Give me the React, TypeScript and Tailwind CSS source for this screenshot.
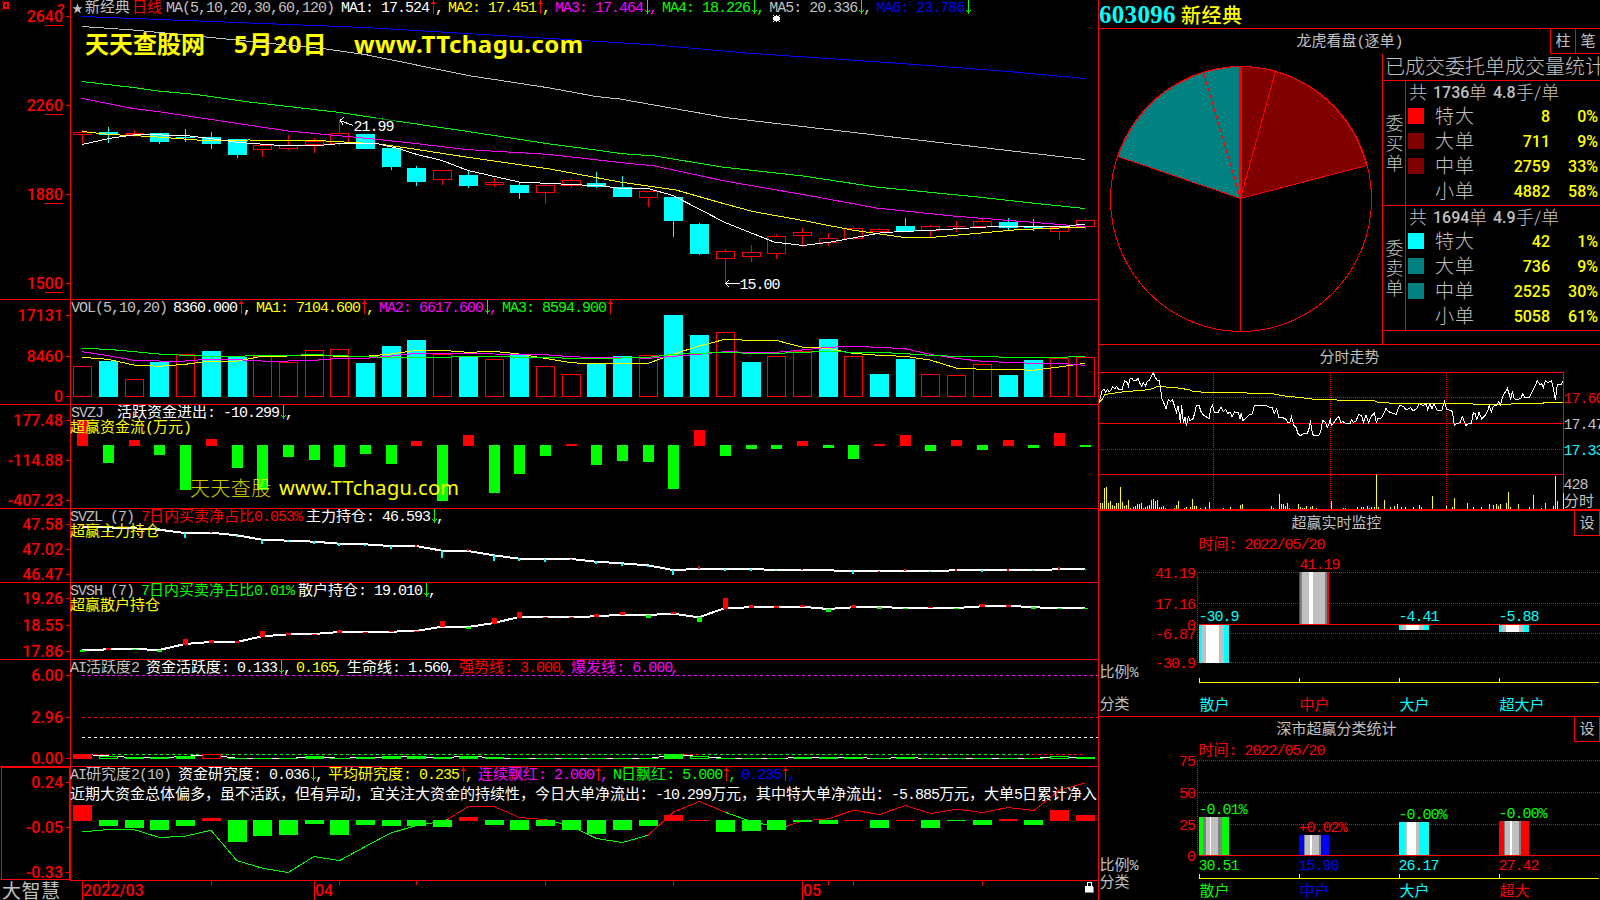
import type { ReactNode } from 'react';

const RED = '#ff0000';
const GREEN = '#00ff00';
const CYAN = '#00ffff';
const YELLOW = '#ffff00';
const MAGENTA = '#ff00ff';
const WHITE = '#ffffff';
const GRAY = '#c0c0c0';
const BLUE = '#0000ff';
const CJK = '"Noto Sans CJK SC", sans-serif';
const MONO = '"Liberation Mono", monospace';

const splitRuns = (s: string) => s.match(/[\u2e80-\uffff]+|[^\u2e80-\uffff]+/g) ?? [];
const isCjk = (s: string) => s.charCodeAt(0) >= 0x2e80;

/** Inline text: 15px Chinese glyphs with 8px wide Latin cells. */
function Mix({ children }: { children: string }) {
  return (
    <>
      {splitRuns(children).map((r, i) =>
        isCjk(r) ? (
          <span key={i} className="font-['Noto_Sans_CJK_SC',sans-serif] text-[15px] leading-[0] font-normal">{r}</span>
        ) : (
          <span key={i} className="font-['Liberation_Mono',monospace] text-[15px] tracking-[-1px]">{r}</span>
        ),
      )}
    </>
  );
}

/** Same type setting for labels inside charts. */
function Label({ x, y, s, fill, end }: { x: number; y: number; s: string; fill: string; end?: boolean }) {
  return (
    <text x={end ? x - 2 : x - 0.5} y={y} fill={fill} fontSize={15} textAnchor={end ? 'end' : 'start'}>
      {splitRuns(s).map((r, i) => (
        <tspan key={i} fontFamily={isCjk(r) ? CJK : MONO} letterSpacing={isCjk(r) ? 0 : -1}>{r}</tspan>
      ))}
    </text>
  );
}

function Canvas({ x, y, w, h, children }: { x: number; y: number; w: number; h: number; children: ReactNode }) {
  return (
    <svg className="absolute top-0 left-0 whitespace-pre" width={w} height={h} viewBox={`${x} ${y} ${w} ${h}`} shapeRendering="crispEdges">
      {children}
    </svg>
  );
}

const cx = (i: number) => Math.floor(82.82 + i * 25.7);

function Box({ x, y, w, h, fill }: { x: number; y: number; w: number; h: number; fill: string }) {
  return <rect x={x} y={y} width={w} height={h} fill={fill} />;
}
function Outline({ x, y, w, h, color, fill = 'none' }: { x: number; y: number; w: number; h: number; color: string; fill?: string }) {
  return <rect x={x + 0.5} y={y + 0.5} width={w - 1} height={Math.max(h - 1, 0.5)} fill={fill} stroke={color} />;
}
function Line({ pts, color, w = 1 }: { pts: number[][]; color: string; w?: number }) {
  return <polyline points={pts.map((p) => p.join(',')).join(' ')} fill="none" stroke={color} strokeWidth={w} />;
}

function Axis({ ticks, top, bottom }: { ticks: [string, number][]; top: number; bottom: number }) {
  return (
    <g>
      <Box x={70} y={top} w={1} h={bottom - top} fill={RED} />
      {ticks.map(([t, y]) => (
        <g key={t}>
          <Box x={66} y={y} w={4} h={1} fill={RED} />
          <text x={63} y={y + 6} fill={RED} textAnchor="end" fontSize={16} fontWeight={500} fontFamily="Roboto, sans-serif">{t}</text>
        </g>
      ))}
    </g>
  );
}

/* ---------- indicator header ---------- */

type Item = { t: string; c: string; a?: 'u' | 'd'; last?: boolean };

function Arrow({ dir }: { dir: 'u' | 'd' }) {
  return (
    <svg width="8" height="14" viewBox="0 0 8 14" shapeRendering="crispEdges" className="-mt-px shrink-0">
      {dir === 'u' ? (
        <path d="M4 0h1v14h-1zM3 2h3v1h-3zM2 3h5v1h-5z" fill={RED} />
      ) : (
        <path d="M4 0h1v14h-1zM3 11h3v1h-3zM2 10h1v1h-1zM6 10h1v1h-1z" fill={GREEN} />
      )}
    </svg>
  );
}

function Head({ title, items, pad }: { title: ReactNode; items: Item[]; pad: string }) {
  return (
    <div className="-ml-px flex h-4 font-['Liberation_Mono',monospace] text-[15px] leading-4">
      <div className={`shrink-0 text-[#c0c0c0] ${pad}`}>{title}</div>
      {items.map((it, i) => (
        <div key={i} className="flex shrink-0" style={{ color: it.c }}>
          <span><Mix>{it.t}</Mix></span>
          {it.a && <Arrow dir={it.a} />}
          <span className="-ml-[2px] w-[13px]">{it.last ? '' : ','}</span>
        </div>
      ))}
    </div>
  );
}

function Panel({ h, children }: { h: string; children: ReactNode }) {
  return <section className={`relative shrink-0 overflow-hidden border-b border-[#ff0000] ${h}`}>{children}</section>;
}

/* ---------- candles ---------- */

// [color, body top, body bottom, wick top, wick bottom]
const candles: [string, number, number, number, number][] = [
  ['r', 132, 135, 130, 143], ['c', 132, 135, 127, 143], ['r', 133, 135, 130, 137], ['c', 133, 142, 133, 144],
  ['c', 137, 138, 129, 142], ['c', 137, 144, 132, 149], ['c', 139, 155, 139, 158], ['r', 145, 150, 145, 157],
  ['r', 145, 149, 135, 150], ['r', 141, 145, 138, 153], ['r', 133, 144, 120, 146], ['c', 134, 149, 134, 149],
  ['c', 148, 167, 148, 170], ['c', 168, 182, 166, 186], ['r', 170, 180, 170, 185], ['c', 175, 186, 171, 188],
  ['r', 182, 185, 178, 187], ['c', 185, 193, 183, 199], ['r', 185, 193, 184, 204], ['r', 180, 186, 178, 188],
  ['c', 183, 187, 172, 188], ['c', 187, 197, 176, 197], ['r', 191, 198, 191, 207], ['c', 197, 221, 197, 237],
  ['c', 224, 254, 223, 255], ['r', 251, 259, 249, 283], ['r', 252, 257, 245, 262], ['r', 236, 254, 234, 259],
  ['r', 232, 236, 228, 247], ['r', 238, 243, 233, 246], ['r', 228, 239, 226, 240], ['r', 229, 232, 228, 235],
  ['c', 226, 231, 218, 231], ['r', 226, 231, 225, 237], ['r', 226, 227, 221, 232], ['r', 221, 227, 219, 227],
  ['c', 222, 228, 218, 231], ['c', 227, 228, 219, 231], ['r', 227, 232, 225, 240], ['r', 220, 227, 218, 229],
];

const maLines: [string, number[][]][] = [
  [BLUE, [[82, 16.5], [147, 19], [276, 24], [365, 27.5], [550, 38.5], [655, 45], [746, 53], [901, 63.5], [1009, 71.5], [1085, 78.5]]],
  [GRAY, [[82, 26.5], [133, 30], [196, 36], [231, 39.5], [326, 49], [365, 54.5], [468, 75.5], [550, 88], [596, 96.5], [620, 99], [725, 117.5], [824, 129], [1085, 159.5]]],
  [GREEN, [[82, 81.5], [133, 87.5], [158, 91], [196, 94.5], [245, 101.5], [340, 112.5], [396, 121], [468, 131.5], [550, 144], [596, 150], [620, 153.5], [655, 156], [722, 167], [803, 176], [876, 187], [978, 197], [1041, 204], [1085, 208.5]]],
  [MAGENTA, [[82, 98.5], [133, 108.5], [161, 112], [288, 131], [358, 137.5], [407, 142.5], [466, 149.5], [550, 154.5], [620, 162.5], [655, 166], [722, 180.5], [817, 197], [876, 208], [953, 216], [1041, 223], [1085, 226.5]]],
  [YELLOW, [[82, 131.5], [109, 134.5], [151, 136.5], [210, 141], [249, 140], [326, 141], [379, 144], [417, 149.5], [466, 157], [550, 169], [620, 182], [676, 190], [725, 204], [753, 211.5], [803, 220.5], [852, 230], [901, 237], [936, 237], [1020, 229.5], [1085, 227]]],
  [WHITE, [[82, 144.5], [109, 138.5], [137, 134.5], [186, 135.5], [214, 139], [239, 142.5], [281, 145.5], [319, 145.5], [340, 143.5], [379, 144], [400, 149], [417, 154.5], [442, 160.5], [468, 170.5], [519, 182], [550, 183.5], [603, 186], [620, 188.5], [648, 188.5], [673, 195.5], [701, 210], [725, 222.5], [774, 242], [803, 245.5], [831, 242], [883, 232.5], [936, 230], [995, 226.5], [1066, 226.5], [1080, 224.5], [1085, 224.5]]],
];

function PricePanel() {
  return (
    <Panel h="h-[300px]">
      <Canvas x={0} y={0} w={1098} h={299}>
        <Axis top={0} bottom={299} ticks={[['2640', 16], ['2260', 105], ['1880', 194], ['1500', 283]]} />
        {[25, 114, 203, 292].map((y) => <Box key={y} x={45} y={y} w={18} h={1} fill={RED} />)}
        <path d="M3 2h6v7h-6zM2 9h1v1h-1zM9 9h1v1h-1zM2 1h1v1h-1z" fill={RED} />
        <Box x={5} y={4} w={2} h={3} fill="#000" />
        <text x={57} y={13} fill={RED} fontSize={13} fontWeight={700} fontFamily='"Liberation Sans", sans-serif'>?</text>
        {candles.map(([k, t, b, wt, wb], i) => {
          const x = cx(i);
          const c = k === 'r' ? RED : CYAN;
          return (
            <g key={i}>
              <Box x={x} y={wt} w={1} h={Math.max(t - wt, 0)} fill={c} />
              <Box x={x} y={b} w={1} h={Math.max(wb - b, 0)} fill={c} />
              {k === 'c' || b - t < 3 ? <Box x={x - 9} y={t} w={19} h={b - t} fill={c} /> : <Outline x={x - 9} y={t} w={19} h={b - t} color={c} />}
            </g>
          );
        })}
        {maLines.map(([c, p], i) => <Line key={i} color={c} pts={p} />)}
        <Line color="#008000" pts={[[375, 118], [396, 121]]} />
        <path d="M340 120.5L353 125.5M340 120.5L344 117.5M340 120.5L343 124.5" stroke={WHITE} fill="none" />
        <Label x={354} y={131} s="21.99" fill={WHITE} />
        <path d="M725 283.5H740M725.5 283.5L729 280M725.5 283.5L729 287" stroke={WHITE} fill="none" />
        <Label x={740} y={289} s="15.00" fill={WHITE} />
        <path d="M774 16h5v5h-5zM773 17h7v3h-7zM773 15h1v1h-1zM779 15h1v1h-1zM773 21h1v1h-1zM779 21h1v1h-1zM776 15h1v7h-1z" fill={WHITE} />
      </Canvas>
      <div className="relative pt-px">
        <Head
          pad="ml-[73px] w-[269px]"
          title={
            <div className="flex">
              <svg width="11" height="11" viewBox="0 0 24 24" className="mt-[2px] mr-[2px] shrink-0"><path d="M12 1l3 8h8.500l-7 5.200 2.700 8.500L12 17.500l-7.200 5.200 2.700-8.500-7-5.200H9z" fill={GRAY} /></svg>
              <span className="w-[47px] shrink-0"><Mix>新经典</Mix></span>
              <span className="w-[34px] shrink-0 text-[#ff0000]"><Mix>日线</Mix></span>
              <Mix>MA(5,10,20,30,60,120)</Mix>
            </div>
          }
          items={[
            { t: 'MA1: 17.524', c: WHITE, a: 'u' },
            { t: 'MA2: 17.451', c: YELLOW, a: 'u' },
            { t: 'MA3: 17.464', c: MAGENTA, a: 'd' },
            { t: 'MA4: 18.226', c: GREEN, a: 'd' },
            { t: 'MA5: 20.336', c: GRAY, a: 'd' },
            { t: 'MA6: 23.786', c: BLUE, a: 'd', last: true },
          ]}
        />
        <div className="mt-[11px] ml-[85px] flex font-['Noto_Sans','Noto_Sans_CJK_SC',sans-serif] text-2xl leading-8 font-bold text-[#ffff00]">
          <span className="w-[149px]">天天查股网</span>
          <span className="w-[120px] tracking-[0.8px]">5月20日</span>
          <span className="tracking-[0.45px]">www.TTchagu.com</span>
        </div>
      </div>
    </Panel>
  );
}

/* ---------- volume ---------- */

const volumes: [string, number][] = [
  ['r', 366], ['c', 361], ['r', 379], ['c', 362], ['r', 354], ['c', 351], ['c', 357], ['r', 356], ['r', 362], ['r', 350],
  ['r', 349], ['c', 363], ['c', 346], ['c', 340], ['r', 354], ['c', 357], ['r', 359], ['c', 355], ['r', 366], ['r', 374],
  ['c', 364], ['c', 356], ['r', 355], ['c', 315], ['c', 335], ['r', 332], ['c', 362], ['r', 356], ['r', 351], ['c', 339],
  ['r', 356], ['c', 374], ['c', 359], ['r', 374], ['r', 375], ['r', 364], ['c', 375], ['c', 360], ['r', 358], ['r', 357],
];
const volLines: [string, number[]][] = [
  [YELLOW, [187, 193, 210, 214, 208, 198, 198, 184, 183, 180, 184, 184, 177, 166, 166, 172, 169, 177, 190, 203, 207, 205, 205, 178, 153, 133, 136, 136, 156, 160, 175, 181, 184, 195, 219, 223, 223, 226, 216, 205]],
  [MAGENTA, [170, 182, 196, 198, 198, 192, 194, 198, 198, 196, 190, 190, 183, 175, 176, 176, 177, 178, 179, 185, 188, 187, 190, 184, 178, 170, 172, 172, 165, 157, 154, 157, 161, 178, 190, 199, 202, 205, 205, 211]],
  [GREEN, [160, 163, 170, 177, 181, 184, 184, 181, 181, 179, 182, 185, 187, 187, 187, 184, 184, 187, 187, 190, 190, 189, 187, 178, 175, 172, 175, 175, 172, 169, 172, 172, 176, 181, 184, 184, 187, 187, 187, 184]],
];

function VolumePanel() {
  return (
    <Panel h="h-[105px]">
      <Canvas x={0} y={300} w={1098} h={104}>
        <Axis top={300} bottom={404} ticks={[['17131', 315], ['8460', 356], ['0', 396]]} />
        {volumes.map(([k, t], i) =>
          k === 'c' ? <Box key={i} x={cx(i) - 9} y={t} w={19} h={397 - t} fill={CYAN} /> : <Outline key={i} x={cx(i) - 9} y={t} w={19} h={397 - t} color={RED} />,
        )}
        {volLines.map(([c, ys]) => <Line key={c} color={c} pts={ys.map((y, i) => [cx(i), 295 + y / 3])} />)}
      </Canvas>
      <div className="relative pt-px">
        <Head
          pad="ml-[72px] w-[102px]"
          title={<Mix>VOL(5,10,20)</Mix>}
          items={[
            { t: '8360.000', c: WHITE, a: 'u' },
            { t: 'MA1: 7104.600', c: YELLOW, a: 'u' },
            { t: 'MA2: 6617.600', c: MAGENTA, a: 'd' },
            { t: 'MA3: 8594.900', c: GREEN, a: 'u', last: true },
          ]}
        />
      </div>
    </Panel>
  );
}

/* ---------- capital flow ---------- */

// bar ends, in thirds of a pixel below y=295; the base line is 450
const flow = [375, 504, 435, 480, 585, 432, 519, 585, 486, 495, 516, 477, 507, 438, 618, 420, 594, 537, 483, 447, 510, 498, 501, 582, 405, 483, 462, 462, 438, 459, 492, 447, 420, 468, 435, 465, 435, 459, 414, 456];

function FlowPanel() {
  return (
    <Panel h="h-[104px]">
      <Canvas x={0} y={405} w={1098} h={103}>
        <Axis top={405} bottom={508} ticks={[['177.48', 420], ['-114.88', 460], ['-407.23', 500]]} />
        {flow.map((v, i) => {
          const y = Math.round(295 + v / 3);
          return v < 450 ? <Box key={i} x={cx(i) - 5} y={y} w={11} h={446 - y} fill={RED} /> : <Box key={i} x={cx(i) - 5} y={445} w={11} h={y - 445} fill={GREEN} />;
        })}
      </Canvas>
      <div className="relative pt-px">
        <Head pad="ml-[72px] w-[46px]" title={<Mix>SVZJ</Mix>} items={[{ t: '活跃资金进出: -10.299', c: WHITE, a: 'd' }]} />
        <div className="-mt-px ml-[70px] text-[15px] leading-4 font-['Liberation_Mono',monospace] text-[#ffff00]"><Mix>超赢资金流(万元)</Mix></div>
        <div className="mt-[37px] ml-[190px] flex text-xl leading-7 text-[#ffff00]">
          <span className="w-[89px] font-['Noto_Sans_CJK_SC',sans-serif] font-light tracking-[0.4px] opacity-80">天天查股</span>
          <span className="font-['Noto_Sans',sans-serif] tracking-[0.35px]">www.TTchagu.com</span>
        </div>
      </div>
    </Panel>
  );
}

/* ---------- holdings ---------- */

const mainHold = [697, 697, 700, 704, 714, 713, 721, 734, 737, 740, 746, 748, 753, 753, 767, 768, 781, 791, 791, 792, 800, 805, 811, 825, 822, 822, 822, 825, 825, 826, 828, 828, 828, 828, 826, 825, 825, 825, 823, 822];
const mainMarks: [number, string, number, number][] = [
  [0, RED, 688, 697], [1, CYAN, 699, 708], [3, CYAN, 700, 706], [4, CYAN, 714, 729], [5, RED, 710, 713], [6, CYAN, 721, 728], [7, CYAN, 734, 746], [8, CYAN, 735, 741],
  [9, CYAN, 738, 746], [10, CYAN, 744, 752], [11, CYAN, 746, 752], [12, CYAN, 753, 762], [13, RED, 750, 756], [14, CYAN, 768, 789], [15, RED, 762, 768], [16, CYAN, 780, 798],
  [17, CYAN, 790, 800], [18, CYAN, 792, 801], [19, RED, 792, 795], [20, CYAN, 798, 807], [21, CYAN, 804, 813], [22, CYAN, 810, 816], [23, CYAN, 825, 840], [24, RED, 813, 822],
  [25, CYAN, 822, 828], [26, CYAN, 822, 828], [27, CYAN, 825, 828], [28, RED, 822, 825], [30, CYAN, 828, 837], [31, RED, 828, 831], [32, RED, 822, 828], [33, CYAN, 828, 831],
  [34, RED, 822, 828], [35, CYAN, 825, 831], [36, RED, 822, 828], [37, CYAN, 825, 828], [38, RED, 816, 825], [39, CYAN, 822, 825],
];
const retailHold = [211, 208, 207, 210, 192, 186, 186, 169, 163, 162, 156, 156, 155, 153, 140, 141, 129, 111, 111, 111, 109, 104, 105, 101, 112, 84, 82, 80, 80, 87, 82, 81, 84, 84, 84, 79, 77, 82, 84, 84];
const retailMarks: [number, string, number, number][] = [
  [0, GREEN, 210, 215], [1, RED, 204, 209], [2, GREEN, 207, 210], [3, GREEN, 209, 215], [4, RED, 177, 195], [5, RED, 180, 189], [6, RED, 183, 189], [7, RED, 153, 171], [8, RED, 159, 165],
  [9, RED, 161, 164], [10, RED, 150, 159], [11, RED, 156, 159], [12, RED, 153, 156], [13, RED, 153, 156], [14, RED, 123, 141], [15, GREEN, 141, 147], [16, RED, 114, 132],
  [17, RED, 96, 114], [18, RED, 111, 114], [19, RED, 111, 114], [20, RED, 102, 111], [21, RED, 96, 105], [22, GREEN, 105, 114], [23, RED, 96, 102], [24, GREEN, 111, 126],
  [25, RED, 54, 87], [26, RED, 75, 84], [27, RED, 78, 84], [28, RED, 75, 81], [29, GREEN, 87, 96], [30, RED, 75, 84], [31, GREEN, 81, 87], [32, GREEN, 84, 87],
  [33, RED, 81, 84], [34, GREEN, 84, 87], [35, RED, 72, 81], [36, RED, 75, 81], [37, GREEN, 81, 87], [38, GREEN, 84, 87], [39, GREEN, 84, 87],
];

function Marks({ data, base, w }: { data: [number, string, number, number][]; base: number; w: number }) {
  return (
    <g>
      {data.map(([i, c, a, b]) => (
        <Box key={i} x={cx(i) - Math.floor(w / 2)} y={Math.round(base + a / 3)} w={w} h={Math.max(1, Math.round((b - a) / 3))} fill={c} />
      ))}
    </g>
  );
}

function HoldTitle({ code, ratio, color }: { code: string; ratio: string; color: string }) {
  return (
    <div className="flex">
      <span className="w-[71px]"><Mix>{code}</Mix></span>
      <span className="mr-1" style={{ color }}><Mix>{ratio}</Mix></span>
    </div>
  );
}

function MainHoldPanel() {
  return (
    <Panel h="h-[74px]">
      <Canvas x={0} y={509} w={1098} h={73}>
        <Axis top={509} bottom={582} ticks={[['47.58', 524], ['47.02', 549], ['46.47', 574]]} />
        <Line color={WHITE} w={2} pts={mainHold.map((y, i) => [cx(i), 295 + y / 3])} />
        <Marks data={mainMarks} base={295} w={2} />
      </Canvas>
      <div className="relative pt-px">
        <Head pad="ml-[71px]" title={<HoldTitle code="SVZL (7)" ratio="7日内买卖净占比0.053%" color={RED} />} items={[{ t: '主力持仓: 46.593', c: WHITE, a: 'd' }]} />
        <div className="-mt-px ml-[70px] font-['Liberation_Mono',monospace] text-[15px] leading-4 text-[#ffff00]"><Mix>超赢主力持仓</Mix></div>
      </div>
    </Panel>
  );
}

function RetailHoldPanel() {
  return (
    <Panel h="h-[77px]">
      <Canvas x={0} y={583} w={1098} h={76}>
        <Axis top={583} bottom={659} ticks={[['19.26', 598], ['18.55', 625], ['17.86', 651]]} />
        <Line color={WHITE} w={2} pts={retailHold.map((y, i) => [cx(i), 580 + y / 3])} />
        <Marks data={retailMarks} base={580} w={5} />
      </Canvas>
      <div className="relative pt-px">
        <Head pad="ml-[71px]" title={<HoldTitle code="SVSH (7)" ratio="7日内买卖净占比0.01%" color={GREEN} />} items={[{ t: '散户持仓: 19.010', c: WHITE, a: 'd' }]} />
        <div className="-mt-px ml-[70px] font-['Liberation_Mono',monospace] text-[15px] leading-4 text-[#ffff00]"><Mix>超赢散户持仓</Mix></div>
      </div>
    </Panel>
  );
}

/* ---------- activity ---------- */

const activity = [522, 528, 531, 531, 528, 522, 534, 534, 534, 528, 534, 531, 528, 528, 531, 528, 531, 534, 534, 534, 534, 534, 534, 522, 528, 534, 534, 534, 531, 531, 531, 534, 531, 534, 534, 534, 534, 534, 528, 531];
const hollow = [1, 5, 24, 38];
const activityLine = [522, 527, 532, 533, 528, 524, 534, 535, 535, 529, 534, 532, 530, 529, 532, 528, 532, 535, 535, 535, 535, 535, 535, 524, 528, 534, 535, 535, 531, 532, 531, 535, 531, 535, 535, 535, 535, 535, 528, 534];

function Dash({ x1, x2, y, c }: { x1: number; x2: number; y: number; c: string }) {
  return <line x1={x1} x2={x2} y1={y + 0.5} y2={y + 0.5} stroke={c} strokeDasharray="3 3" />;
}

function ActivityPanel() {
  return (
    <Panel h="h-[107px]">
      <Canvas x={0} y={660} w={1098} h={106}>
        <Axis top={660} bottom={766} ticks={[['6.00', 675], ['2.96', 717], ['0.00', 758]]} />
        <Dash x1={82} x2={1098} y={675} c={MAGENTA} />
        <Dash x1={82} x2={1098} y={717} c={RED} />
        <Dash x1={82} x2={1098} y={737} c={WHITE} />
        <Dash x1={82} x2={112} y={754} c={RED} />
        <Dash x1={112} x2={684} y={754} c={GREEN} />
        <Dash x1={684} x2={702} y={754} c={RED} />
        <Dash x1={702} x2={1032} y={754} c={GREEN} />
        <Dash x1={1032} x2={1085} y={754} c={RED} />
        <Line color={WHITE} pts={activityLine.map((y, i) => [cx(i), 580.3 + y / 3])} />
        {activity.map((v, i) => {
          const y = 580 + v / 3;
          const c = i === 0 || i === 5 ? RED : GREEN;
          return hollow.includes(i) ? <Outline key={i} x={cx(i) - 9} y={y} w={19} h={759 - y} color={c} fill="#000" /> : <Box key={i} x={cx(i) - 9} y={y} w={19} h={759 - y} fill={c} />;
        })}
      </Canvas>
      <div className="relative pt-px">
        <Head
          pad="ml-[71px] w-[76px]"
          title={<Mix>AI活跃度2</Mix>}
          items={[
            { t: '资金活跃度: 0.133', c: WHITE, a: 'd' },
            { t: '0.165', c: YELLOW },
            { t: '生命线: 1.560', c: WHITE },
            { t: '强势线: 3.000', c: RED },
            { t: '爆发线: 6.000', c: MAGENTA },
          ]}
        />
      </div>
    </Panel>
  );
}

/* ---------- research ---------- */

const research = [675, 738, 744, 750, 738, 714, 786, 768, 765, 732, 765, 735, 738, 738, 741, 711, 735, 750, 738, 750, 762, 750, 738, 705, 719, 756, 753, 750, 726, 732, 719, 744, 719, 744, 723, 735, 717, 735, 690, 705];
const researchLine: [string, number[][]][] = [
  [GREEN, [[0, 755], [1, 748], [2, 748], [3, 772], [4, 768], [5, 750], [6, 841], [7, 864], [8, 877], [9, 829], [10, 841], [11, 799], [12, 758], [13, 736], [14, 723], [14.2, 718]]],
  [RED, [[14.2, 718], [15, 679], [16, 679], [17, 712], [18, 718]]],
  [GREEN, [[18, 718], [19, 738], [20, 775], [21, 787], [22, 765]]],
  [RED, [[22, 765], [23, 695], [24, 664], [25, 696]]],
  [GREEN, [[25, 696], [26, 724], [27, 740], [27.4, 738]]],
  [RED, [[27.4, 738], [28, 722], [29, 716], [30, 690], [31, 703], [32, 676], [33, 700], [34, 687], [35, 697], [36, 682], [37, 691], [38, 630], [39, 608]]],
];

function ResearchPanel() {
  return (
    <section className="relative h-[114px] shrink-0 overflow-hidden">
      <Canvas x={0} y={767} w={1098} h={114}>
        <Axis top={767} bottom={880} ticks={[['0.24', 782], ['-0.05', 827], ['-0.33', 872]]} />
        <Outline x={1} y={767} w={69} h={113} color={RED} />
        <Box x={70} y={880} w={1028} h={1} fill={RED} />
        {researchLine.map(([c, p], k) => <Line key={k} color={c} pts={p.map(([i, y]) => [82.5 + i * 25.71, 580.2 + y / 3])} />)}
        {research.map((v, i) => {
          const y = Math.round(580 + v / 3);
          return v < 720 ? <Box key={i} x={cx(i) - 9} y={y} w={19} h={821 - y} fill={RED} /> : <Box key={i} x={cx(i) - 9} y={820} w={19} h={y - 820} fill={GREEN} />;
        })}
      </Canvas>
      <div className="relative pt-px">
        <Head
          pad="ml-[71px] w-[108px]"
          title={<Mix>AI研究度2(10)</Mix>}
          items={[
            { t: '资金研究度: 0.036', c: WHITE, a: 'd' },
            { t: '平均研究度: 0.235', c: YELLOW, a: 'u' },
            { t: '连续飘红: 2.000', c: MAGENTA, a: 'u' },
            { t: 'N日飘红: 5.000', c: GREEN, a: 'u' },
            { t: '0.235', c: BLUE, a: 'u' },
          ]}
        />
        <div className="mt-[4px] ml-[70px] font-['Liberation_Mono',monospace] text-[15px] leading-4 whitespace-nowrap text-white">
          <Mix>近期大资金总体偏多，虽不活跃，但有异动，宜关注大资金的持续性，今日大单净流出：-10.299万元，其中特大单净流出：-5.885万元，大单5日累计净入</Mix>
        </div>
      </div>
    </section>
  );
}

function TimeAxis() {
  const months: [number, string][] = [[82, '2022/03'], [314, '04'], [802, '05']];
  return (
    <footer className="relative h-[19px] shrink-0 overflow-hidden">
      <Canvas x={0} y={881} w={1098} h={19}>
        {months.map(([x, t]) => (
          <g key={t}>
            <Box x={x} y={881} w={1} h={19} fill={RED} />
            <text x={x + 1} y={896} fill={RED} fontSize={16} fontWeight={500} fontFamily="Roboto, sans-serif">{t}</text>
          </g>
        ))}
        {[108, 211, 339, 416, 545, 673, 828, 853, 982].map((x) => <Box key={x} x={x} y={881} w={1} h={4} fill={RED} />)}
        <path d="M1085 886h8v6h-8zM1087 883h1v3h-1zM1091 883h1v3h-1zM1087 882h5v1h-5z" fill={WHITE} />
        <path d="M1093 887h1v6h-9v-1h8z" fill="#808080" />
      </Canvas>
      <div className="relative ml-[2px] font-['Noto_Sans_CJK_SC',sans-serif] text-[19px] leading-[17px] tracking-[0.5px] text-[#c0c0c0]">大智慧</div>
    </footer>
  );
}

/* ---------- order book pie ---------- */

const P: [number, number] = [1240.5, 198.5];
const arc = (a: number[], b: number[]) => `M${P[0]} ${P[1]}L${a[0]} ${a[1]}A130.500 132.500 0 0 1 ${b[0]} ${b[1]}Z`;

function Pie() {
  return (
    <Canvas x={1099} y={54} w={283} h={290}>
      <ellipse cx={1241} cy={199} rx={130.5} ry={132.5} fill="none" stroke={RED} />
      <path d={arc([1118, 156.5], [1203.5, 72.5])} fill="#008080" stroke={RED} />
      <path d={arc([1203.5, 72.5], [1240.5, 66.5])} fill="#008080" stroke={RED} />
      <path d={arc([1241.5, 66.5], [1275.5, 71.5])} fill="#800000" stroke={RED} />
      <path d={arc([1275.5, 71.5], [1366.5, 165.5])} fill="#800000" stroke={RED} />
      <Box x={1240} y={67} w={2} h={131} fill={RED} />
      <Box x={1239} y={67} w={3} h={118} fill={RED} />
      <Box x={1240} y={198} w={1} h={134} fill={RED} />
    </Canvas>
  );
}

type Row = [string, string, string, string];
function OrderGroup({ side, total, avg, rows }: { side: string[]; total: string; avg: string; rows: Row[] }) {
  return (
    <div className="flex h-[125px] border-b border-[#ff0000]">
      <div className="flex w-[21px] shrink-0 flex-col items-center pt-[31px] font-['Noto_Sans_CJK_SC',sans-serif] text-[18px] leading-5 font-light">
        {side.map((c) => <span key={c}>{c}</span>)}
      </div>
      <div className="min-w-0 flex-1 border-l border-[#ff0000] font-['Roboto','Noto_Sans_CJK_SC',sans-serif] text-base">
        <div className="flex h-[23px] items-center pt-px pl-[3px] leading-5 whitespace-nowrap">
          <span className="w-6 text-[18px] font-light">共</span>
          <span className="w-[36px] font-medium">{total}</span>
          <span className="w-[24px] text-[18px] font-light">单</span>
          <span className="w-[23px] font-medium">{avg}</span>
          <span className="text-[18px] font-light">手/单</span>
        </div>
        {rows.map(([label, count, pct, swatch]) => (
          <div key={label} className="flex h-[25px] items-center pl-[2px]">
            <span className="size-4 shrink-0 -translate-y-px" style={{ background: swatch }} />
            <span className="ml-[11px] w-[46px] shrink-0 text-[19px] leading-5 font-light tracking-[1px]">{label}</span>
            <span className="w-[69px] shrink-0 text-right font-medium text-[#ffff00]">{count}</span>
            <span className="w-[48px] shrink-0 text-right font-medium text-[#ffff00]">{pct}</span>
          </div>
        ))}
      </div>
    </div>
  );
}

function OrderPanel() {
  return (
    <section className="flex h-[345px] shrink-0 flex-col border-b border-[#ff0000] text-[#c0c0c0]">
      <header className="flex h-[29px] items-center border-b border-[#ff0000] pt-[2px]">
        <span className="w-[82px] font-['Liberation_Serif',serif] text-[25px] leading-7 font-bold tracking-[0.3px] text-[#00ffff]">603096</span>
        <span className="font-['Noto_Sans_CJK_SC',sans-serif] text-[20px] leading-7 font-medium tracking-[0.5px] text-[#ffff00]">新经典</span>
      </header>
      <div className="relative flex h-[25px] justify-end">
        <div className="absolute inset-x-0 top-[6px] text-center font-['Liberation_Mono',monospace] text-[15px] leading-4"><Mix>龙虎看盘(逐单)</Mix></div>
        {['柱', '笔'].map((t) => (
          <button key={t} className="relative flex h-[25px] w-[25px] justify-center border-b border-l border-[#ff0000] font-['Noto_Sans_CJK_SC',sans-serif] text-[15px] leading-[22px]">{t}</button>
        ))}
      </div>
      <div className="flex min-h-0 flex-1">
        <div className="relative w-[283px] shrink-0"><Pie /></div>
        <div className="w-[218px] shrink-0 overflow-hidden border-l border-[#ff0000] pl-px">
          <div className="h-[27px] border-b border-[#ff0000] pl-px font-['Noto_Sans_CJK_SC',sans-serif] text-[20px] leading-[24px] font-light whitespace-nowrap">已成交委托单成交量统计</div>
          <OrderGroup side={['委', '买', '单']} total="1736" avg="4.8" rows={[['特大', '8', '0%', '#ff0000'], ['大单', '711', '9%', '#800000'], ['中单', '2759', '33%', '#800000'], ['小单', '4882', '58%', '#000000']]} />
          <OrderGroup side={['委', '卖', '单']} total="1694" avg="4.9" rows={[['特大', '42', '1%', '#00ffff'], ['大单', '736', '9%', '#008080'], ['中单', '2525', '30%', '#008080'], ['小单', '5058', '61%', '#000000']]} />
        </div>
      </div>
    </section>
  );
}

/* ---------- intraday ---------- */

const intraday = '27,187 33,166 37,150 43,148 47,155 52,148 58,155 64,148 68,140 74,146 80,139 86,148 96,148 100,134 104,122 110,124 115,138 120,116 126,114 130,121 138,121 144,114 150,130 155,139 160,127 166,137 172,124 178,121 184,108 190,98 196,112 202,121 208,122 212,148 216,176 222,190 228,205 235,178 241,184 247,178 253,196 259,217 264,198 268,220 271,247 275,196 278,230 281,247 285,230 289,257 295,229 300,241 308,238 314,220 319,196 328,197 332,212 338,223 348,229 357,236 362,206 368,195 373,217 384,217 393,200 400,215 407,208 413,220 420,215 426,230 434,215 445,217 450,236 454,218 458,241 466,235 472,229 478,223 487,221 493,196 530,197 541,202 546,200 553,220 560,205 567,232 586,234 593,247 600,247 604,229 612,256 618,262 624,280 631,287 640,280 652,280 658,262 661,241 665,270 670,286 686,286 692,274 698,241 705,245 712,262 718,250 721,235 724,257 732,247 740,235 746,229 752,246 760,245 768,250 780,250 785,238 790,246 797,244 806,224 815,225 820,247 828,224 836,248 843,230 853,218 859,247 864,234 872,236 880,224 888,205 895,214 905,218 919,223 924,206 930,196 940,198 947,208 955,206 962,203 970,212 980,205 988,190 1000,196 1008,190 1013,208 1019,191 1026,205 1032,190 1042,211 1055,212 1063,184 1070,207 1080,210 1087,214 1093,256 1100,250 1110,248 1117,229 1128,256 1135,250 1144,250 1150,218 1156,220 1160,240 1167,217 1175,236 1187,224 1193,212 1198,196 1204,215 1210,198 1220,195 1226,184 1231,194 1240,165 1252,145 1257,160 1262,178 1267,154 1273,176 1283,178 1293,173 1298,161 1305,173 1318,172 1325,157 1333,142 1342,122 1350,133 1355,130 1360,143 1366,121 1373,128 1384,122 1391,148 1396,178 1402,134 1413,133 1419,124';
const average = '27,187 36,178 45,163 90,156 180,148 202,139 255,142 300,149 308,154 360,157 450,158 545,160 580,167 620,171 680,178 855,182 865,187 930,190 1120,190 1180,193 1250,193 1275,190 1350,190 1370,187 1418,186';
const ticksVol = [32, 489, 37, 489, 43, 444, 49, 441, 55, 489, 61, 483, 67, 495, 73, 498, 79, 489, 85, 489, 91, 441, 97, 486, 103, 498, 109, 495, 115, 480, 121, 504, 130, 501, 136, 498, 142, 492, 148, 492, 154, 489, 160, 504, 166, 501, 172, 498, 178, 495, 184, 480, 190, 477, 196, 483, 202, 480, 208, 501, 214, 502, 220, 498, 226, 503, 253, 504, 259, 495, 265, 483, 283, 504, 289, 501, 301, 501, 307, 477, 313, 498, 319, 498, 331, 504, 346, 501, 358, 486, 400, 504, 421, 501, 451, 495, 457, 492, 544, 498, 550, 504, 568, 462, 574, 492, 580, 492, 586, 498, 592, 489, 598, 503, 625, 492, 631, 500, 637, 504, 643, 504, 649, 498, 661, 501, 667, 498, 679, 503, 724, 483, 760, 504, 766, 504, 802, 501, 814, 502, 820, 502, 832, 498, 838, 504, 844, 501, 853, 500, 859, 403, 865, 501, 883, 480, 901, 501, 913, 498, 922, 492, 934, 500, 946, 501, 970, 501, 988, 495, 994, 500, 1027, 468, 1069, 498, 1087, 501, 1093, 474, 1132, 489, 1150, 500, 1174, 501, 1198, 492, 1210, 495, 1219, 492, 1225, 498, 1231, 492, 1249, 489, 1255, 456, 1261, 500, 1285, 492, 1318, 501, 1330, 465, 1354, 503, 1366, 489, 1390, 498, 1396, 408, 1402, 483, 1420, 459];

const scaled = (s: string) => s.split(' ').map((p) => { const [x, y] = p.split(',').map(Number); return [1090 + x / 3, 340.2 + y / 3]; });

function Dots({ x1, y1, x2, y2 }: { x1: number; y1: number; x2: number; y2: number }) {
  const v = x1 === x2;
  return <line x1={v ? x1 + 0.5 : x1} x2={v ? x2 + 0.5 : x2} y1={v ? y1 : y1 + 0.5} y2={v ? y2 : y2 + 0.5} stroke={RED} strokeDasharray="1 1" />;
}

function IntradayPanel() {
  return (
    <section className="relative h-[166px] shrink-0 overflow-hidden border-b-2 border-[#ff0000]">
      <Canvas x={1099} y={345} w={501} h={164}>
        {[372, 423, 474].map((y) => <Box key={y} x={1099} y={y} w={465} h={1} fill={RED} />)}
        <Box x={1563} y={372} w={1} h={137} fill={RED} />
        <Dots x1={1099} x2={1563} y1={397} y2={397} />
        <Dots x1={1099} x2={1563} y1={449} y2={449} />
        {[1213, 1330, 1446].map((x) => <Dots key={x} x1={x} x2={x} y1={373} y2={509} />)}
        {ticksVol.filter((_, i) => i % 2 === 0).map((x, i) => {
          const y = Math.round(340 + ticksVol[i * 2 + 1] / 3);
          return <Box key={x} x={1090 + Math.floor(x / 3)} y={y} w={1} h={509 - y} fill={YELLOW} />;
        })}
        <Line color={YELLOW} pts={scaled(average)} />
        <Line color={WHITE} pts={scaled(intraday)} />
        <Label x={1564} y={403} s="17.60" fill={RED} />
        <Label x={1564} y={429} s="17.47" fill={GRAY} />
        <Label x={1564} y={455} s="17.33" fill={CYAN} />
        <Label x={1564} y={489} s="428" fill={GRAY} />
        <Label x={1564.5} y={506} s="分时" fill={GRAY} />
      </Canvas>
      <div className="relative pt-[6px] text-center font-['Liberation_Mono',monospace] text-[15px] leading-4 text-[#c0c0c0]"><Mix>分时走势</Mix></div>
    </section>
  );
}

/* ---------- category statistics ---------- */

function PanelTitle({ children }: { children: string }) {
  return (
    <div className="relative flex">
      <div className="flex-1 pt-[6px] text-center font-['Liberation_Mono',monospace] text-[15px] leading-4 text-[#c0c0c0]"><Mix>{children}</Mix></div>
      <button className="flex h-[25px] w-[26px] justify-center border-r border-b border-l border-[#ff0000] font-['Noto_Sans_CJK_SC',sans-serif] text-[15px] leading-[22px] text-[#c0c0c0]">设</button>
    </div>
  );
}

function Cylinder({ x, y, h, bands }: { x: number; y: number; h: number; bands: [number, string][] }) {
  let at = x;
  return (
    <g>
      {bands.map(([w, c], i) => {
        const r = <Box key={i} x={at} y={y} w={w} h={h} fill={c} />;
        at += w;
        return r;
      })}
    </g>
  );
}

const D = '#808080';
const sold: [number, string][] = [[3, CYAN], [4, GRAY], [13, WHITE], [5, GRAY], [5, CYAN]];

function Scale({ y, tick }: { y: number; tick: number }) {
  return (
    <g>
      <Box x={1199} y={y} w={400} h={1} fill={YELLOW} />
      {[1199, 1299, 1399, 1499].map((x) => <Box key={x} x={x} y={y - tick} w={1} h={tick} fill={YELLOW} />)}
    </g>
  );
}

function MonitorPanel() {
  return (
    <section className="relative h-[206px] shrink-0 overflow-hidden border-b border-[#ff0000]">
      <Canvas x={1099} y={511} w={501} h={205}>
        <Label x={1199} y={549} s="时间: 2022/05/20" fill={RED} />
        {[572, 603, 633, 662].map((y) => <Dots key={y} x1={1199} x2={1600} y1={y} y2={y} />)}
        <Dots x1={1197} x2={1197} y1={572} y2={663} />
        {([['41.19', 578], ['17.16', 609], ['0', 630], ['-6.87', 639], ['-30.9', 668]] as [string, number][]).map(([t, y]) => <Label key={t} x={1197} y={y} s={t} fill={RED} end />)}
        <Cylinder x={1199} y={625} h={38} bands={sold} />
        <Cylinder x={1299} y={572} h={52} bands={[[1, RED], [2, D], [7, GRAY], [4, WHITE], [12, GRAY], [2, D], [2, RED]]} />
        <Cylinder x={1399} y={625} h={5} bands={sold} />
        <Cylinder x={1499} y={625} h={7} bands={sold} />
        <Box x={1199} y={624} w={401} h={1} fill={RED} />
        <Label x={1199} y={621} s="-30.9" fill={CYAN} />
        <Label x={1300} y={569} s="41.19" fill={RED} />
        <Label x={1399} y={621} s="-4.41" fill={CYAN} />
        <Label x={1499} y={621} s="-5.88" fill={CYAN} />
        <Scale y={682} tick={4} />
        <Label x={1100} y={677} s="比例%" fill={GRAY} />
        <Label x={1100} y={709} s="分类" fill={GRAY} />
        <Label x={1200} y={710} s="散户" fill={CYAN} />
        <Label x={1300} y={710} s="中户" fill={RED} />
        <Label x={1400} y={710} s="大户" fill={CYAN} />
        <Label x={1500} y={710} s="超大户" fill={CYAN} />
      </Canvas>
      <PanelTitle>超赢实时监控</PanelTitle>
    </section>
  );
}

function CategoryPanel() {
  return (
    <section className="relative h-[183px] shrink-0 overflow-hidden">
      <Canvas x={1099} y={717} w={501} h={183}>
        <Label x={1199} y={755} s="时间: 2022/05/20" fill={RED} />
        {[760, 792, 824].map((y) => <Dots key={y} x1={1199} x2={1600} y1={y} y2={y} />)}
        <Dots x1={1197} x2={1197} y1={760} y2={855} />
        {([['75', 766], ['50', 798], ['25', 830], ['0', 861]] as [string, number][]).map(([t, y]) => <Label key={t} x={1197} y={y} s={t} fill={RED} end />)}
        <Cylinder x={1199} y={817} h={38} bands={[[4, GREEN], [3, D], [4, GRAY], [1, WHITE], [7, GRAY], [4, D], [7, GREEN]]} />
        <Cylinder x={1299} y={835} h={20} bands={[[5, BLUE], [1, D], [5, GRAY], [2, WHITE], [7, GRAY], [2, D], [8, BLUE]]} />
        <Cylinder x={1399} y={822} h={33} bands={[[6, CYAN], [2, GRAY], [9, WHITE], [3, GRAY], [10, CYAN]]} />
        <Cylinder x={1499} y={821} h={34} bands={[[5, RED], [1, D], [5, GRAY], [2, WHITE], [7, GRAY], [2, D], [8, RED]]} />
        <Box x={1199} y={855} w={401} h={1} fill={RED} />
        <Label x={1199} y={814} s="-0.01%" fill={GREEN} />
        <Label x={1299} y={832} s="+0.02%" fill={RED} />
        <Label x={1399} y={819} s="-0.00%" fill={GREEN} />
        <Label x={1499} y={818} s="-0.00%" fill={GREEN} />
        <Label x={1199} y={870} s="30.51" fill={GREEN} />
        <Label x={1299} y={870} s="15.90" fill={BLUE} />
        <Label x={1399} y={870} s="26.17" fill={CYAN} />
        <Label x={1499} y={870} s="27.42" fill={RED} />
        <Scale y={878} tick={4} />
        <Label x={1100} y={870} s="比例%" fill={GRAY} />
        <Label x={1100} y={887} s="分类" fill={GRAY} />
        <Label x={1200} y={896} s="散户" fill={GREEN} />
        <Label x={1300} y={896} s="中户" fill={BLUE} />
        <Label x={1400} y={896} s="大户" fill={CYAN} />
        <Label x={1500} y={896} s="超大" fill={RED} />
      </Canvas>
      <PanelTitle>深市超赢分类统计</PanelTitle>
    </section>
  );
}

export default function App() {
  return (
    <div className="flex h-[900px] w-[1600px] overflow-hidden bg-black whitespace-pre">
      <main className="flex w-[1099px] shrink-0 flex-col border-r border-[#ff0000]">
        <PricePanel />
        <VolumePanel />
        <FlowPanel />
        <MainHoldPanel />
        <RetailHoldPanel />
        <ActivityPanel />
        <ResearchPanel />
        <TimeAxis />
      </main>
      <aside className="flex w-[501px] shrink-0 flex-col">
        <OrderPanel />
        <IntradayPanel />
        <MonitorPanel />
        <CategoryPanel />
      </aside>
    </div>
  );
}
